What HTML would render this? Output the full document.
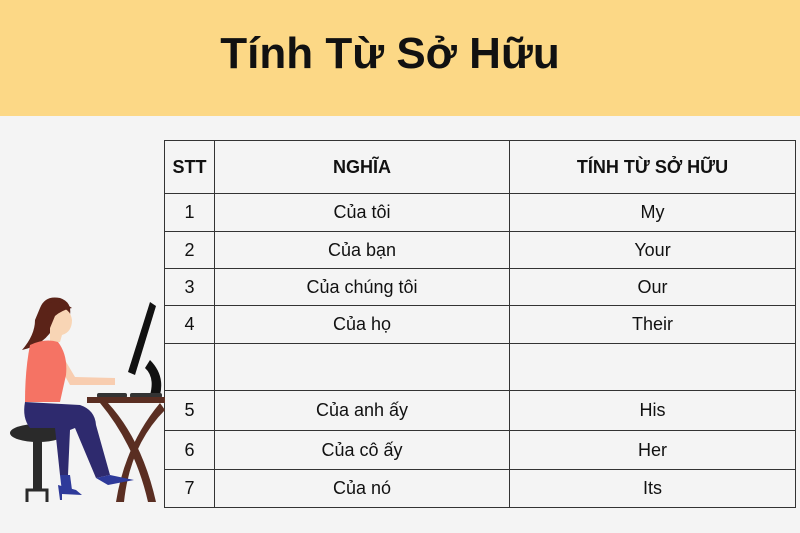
<!DOCTYPE html>
<html><head><meta charset="utf-8"><style>
*{margin:0;padding:0;box-sizing:border-box}
body{width:800px;height:533px;background:#f4f4f4;position:relative;overflow:hidden;font-family:"Liberation Sans",sans-serif;color:#111}
.hdr{position:absolute;left:0;top:0;width:800px;height:116px;background:#fcd886}
.title{position:absolute;left:0;width:780px;top:29px;text-align:center;font-weight:bold;font-size:44px}
table{position:absolute;left:164px;top:140px;border-collapse:collapse}
td{border:1.5px solid #333;text-align:center;font-size:18px;padding:0;background:#f4f4f4}
th{border:1.5px solid #333;font-size:18px;font-weight:bold}
</style></head><body>
<div class="hdr"></div>
<div class="title">Tính Từ Sở Hữu</div>
<table>
<tr style="height:53px"><th style="width:50px">STT</th><th style="width:295px">NGHĨA</th><th style="width:286px">TÍNH TỪ SỞ HỮU</th></tr>
<tr style="height:38px"><td>1</td><td>Của tôi</td><td>My</td></tr>
<tr style="height:37px"><td>2</td><td>Của bạn</td><td>Your</td></tr>
<tr style="height:37px"><td>3</td><td>Của chúng tôi</td><td>Our</td></tr>
<tr style="height:38px"><td>4</td><td>Của họ</td><td>Their</td></tr>
<tr style="height:47px"><td></td><td></td><td></td></tr>
<tr style="height:40px"><td>5</td><td>Của anh ấy</td><td>His</td></tr>
<tr style="height:39px"><td>6</td><td>Của cô ấy</td><td>Her</td></tr>
<tr style="height:38px"><td>7</td><td>Của nó</td><td>Its</td></tr>
</table>
<svg style="position:absolute;left:0;top:280px" width="170" height="253" viewBox="0 0 170 253">
<path d="M150 80 Q165 95 160 115 L150 115 Q155 97 145 88Z" fill="#111"/>
<path d="M150 22 L156 26 L135 95 L128 92Z" fill="#111"/>
<rect x="97" y="113" width="30" height="5" rx="2" fill="#333"/>
<rect x="130" y="113" width="32" height="5" rx="2" fill="#333"/>
<rect x="87" y="117" width="78" height="6" fill="#5a2e22"/>
<path d="M100 123 Q135 165 148 222 L156 222 Q142 160 108 123Z" fill="#5a2e22"/>
<path d="M160 123 Q125 165 116 222 L124 222 Q130 165 165 130Z" fill="#5a2e22"/>
<ellipse cx="38" cy="153" rx="28" ry="9" fill="#2a2a2a"/>
<rect x="33" y="160" width="9" height="50" fill="#2a2a2a"/>
<path d="M27 222 V210 H47 V222" stroke="#2a2a2a" stroke-width="3" fill="none"/>
<path d="M40 28 Q45 15 60 18 Q72 22 70 35 L55 45 Q45 65 22 70 Q35 55 35 40Z" fill="#5b2318"/>
<path d="M52 28 Q70 25 72 40 Q72 52 62 55 L60 62 L50 62 L50 48Z" fill="#f8d5b5"/>
<path d="M46 24 Q58 18 72 28 Q62 30 55 36 L50 48 Z" fill="#5b2318"/>
<path d="M55 78 L70 105 L115 105 L115 98 L75 97 L62 75Z" fill="#f8cdb0"/>
<path d="M30 65 Q45 58 58 62 Q68 75 66 95 L60 122 L25 122 Q25 90 30 65Z" fill="#f57364"/>
<path d="M25 122 L80 125 Q95 130 96 145 L110 195 L96 198 L75 148 L70 150 L68 195 L60 195 L55 148 L30 148 Q22 138 25 122Z" fill="#2e2a6e"/>
<path d="M60 195 L70 195 L72 210 L62 212Z" fill="#2e3a9a"/>
<path d="M96 198 L110 195 L134 200 L108 205Z" fill="#2e3a9a"/>
<path d="M58 205 L76 210 L82 215 L62 214 L62 220 L60 220Z" fill="#2e3a9a"/>
</svg>
</body></html>
